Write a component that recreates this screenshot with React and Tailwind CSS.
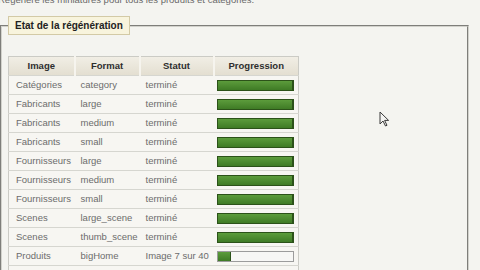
import React from "react";

const rows = [
  { image: "Catégories", format: "category", status: "terminé", pct: 100 },
  { image: "Fabricants", format: "large", status: "terminé", pct: 100 },
  { image: "Fabricants", format: "medium", status: "terminé", pct: 100 },
  { image: "Fabricants", format: "small", status: "terminé", pct: 100 },
  { image: "Fournisseurs", format: "large", status: "terminé", pct: 100 },
  { image: "Fournisseurs", format: "medium", status: "terminé", pct: 100 },
  { image: "Fournisseurs", format: "small", status: "terminé", pct: 100 },
  { image: "Scenes", format: "large_scene", status: "terminé", pct: 100 },
  { image: "Scenes", format: "thumb_scene", status: "terminé", pct: 100 },
  { image: "Produits", format: "bigHome", status: "Image 7 sur 40", pct: 17.5 },
  { image: "Produits", format: "home", status: "Image 7 sur 40", pct: 17.5 },
];

function ProgressBar({ pct }) {
  const done = pct >= 100;
  return (
    <div
      className={`h-[11px] w-[77px] border ${
        done ? "border-[#2c5219] bg-[#4a8a2d]" : "border-[#9c9c9c] bg-[#f7f7f5]"
      }`}
    >
      <div
        className="h-full bg-gradient-to-b from-[#5c9c3c] to-[#3f7b25] border-r border-[#2c5219]"
        style={{ width: `${pct}%` }}
      />
    </div>
  );
}

function Cursor() {
  return (
    <svg
      className="absolute left-[379px] top-[111px]"
      width="11"
      height="16"
      viewBox="0 0 11 16"
    >
      <path
        d="M1 1 L1 13 L4 10 L6.5 15 L8 14.3 L5.6 9.4 L9.6 9.4 Z"
        fill="#f4f4f2"
        stroke="#3a3a3a"
        strokeWidth="1"
        strokeLinejoin="round"
      />
    </svg>
  );
}

export default function App() {
  return (
    <div
      className="relative w-[480px] h-[270px] overflow-hidden bg-[#f4f4f0] text-[9.5px]"
      style={{ fontFamily: '"Liberation Sans", Arial, sans-serif' }}
    >
      <p className="-mt-[6px] ml-[-2px] leading-[12px] text-[#6a6a6a] whitespace-nowrap">
        Régénère les miniatures pour tous les produits et catégories.
      </p>

      <fieldset className="mt-[10px] w-[469px] h-[300px] border-2 border-b-0 [border-style:groove] border-[#d2d2cc] pl-[6px]">
        <legend className="border border-[#d3caa6] bg-[#f8f4dd] px-[6px] py-[3px] leading-[11px] text-[10px] font-bold text-[#222]">
          Etat de la régénération
        </legend>

        <table className="mt-[21px] w-[290px] table-fixed border border-[#cbcbc5]">
          <colgroup>
            <col className="w-[66px]" />
            <col className="w-[65px]" />
            <col className="w-[74px]" />
            <col className="w-[85px]" />
          </colgroup>
          <thead>
            <tr className="h-[19px] bg-gradient-to-b from-[#f1eee5] to-[#e3ded0] text-[#2e2e2e]">
              <th className="font-bold text-center">Image</th>
              <th className="font-bold text-center border-l-2 border-[#f6f4ee]">Format</th>
              <th className="font-bold text-center border-l-2 border-[#f6f4ee]">Statut</th>
              <th className="font-bold text-center border-l-2 border-[#f6f4ee]">Progression</th>
            </tr>
          </thead>
          <tbody className="text-[#6c6c6c]">
            {rows.map((r, i) => (
              <tr key={i} className="h-[19px] bg-[#f7f6f2] border-t border-[#d6d6d0]">
                <td className="pl-[7px] whitespace-nowrap">{r.image}</td>
                <td className="pl-[6px] whitespace-nowrap">{r.format}</td>
                <td className="pl-[6px] whitespace-nowrap">{r.status}</td>
                <td className="pl-[3px]">
                  <ProgressBar pct={r.pct} />
                </td>
              </tr>
            ))}
          </tbody>
        </table>
      </fieldset>

      <Cursor />
    </div>
  );
}
